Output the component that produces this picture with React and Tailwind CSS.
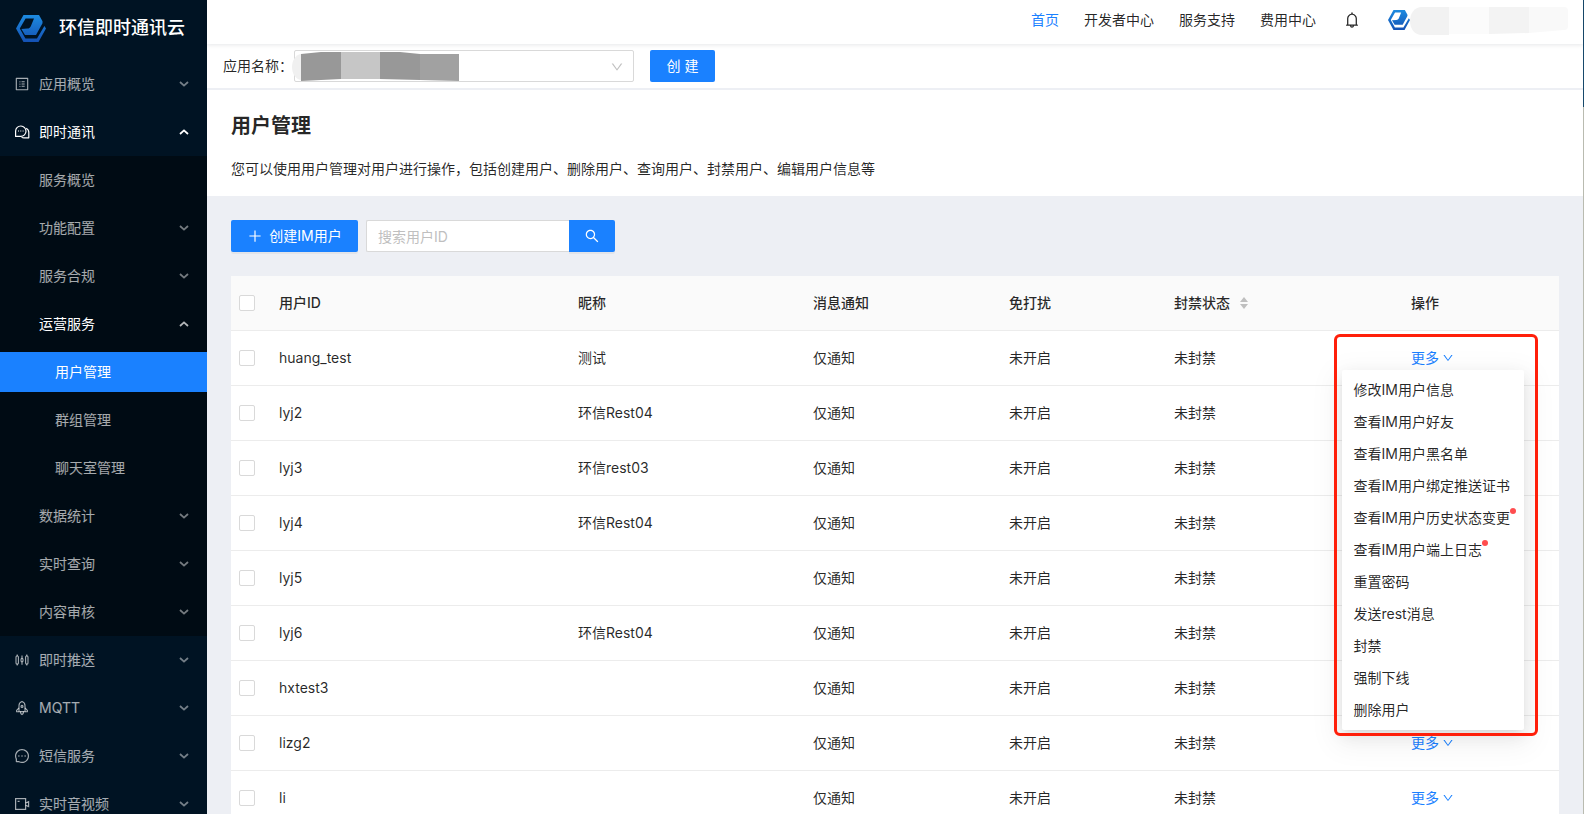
import { useState } from "react";
import {
  AiOutlineBell,
  AiOutlineDown,
  AiOutlinePlus,
  AiOutlineProfile,
  AiOutlineMessage,
  AiOutlineSearch,
} from "react-icons/ai";

const ChatsIcon = () => (
  <svg viewBox="0 0 16 16" className="w-4 h-4" fill="none" stroke="currentColor" strokeWidth="1.2">
    <path d="M1.6 12.4V7a5.2 5.2 0 1 1 5.2 5.4z" strokeLinejoin="round" />
    <path d="M12.2 4.2a4.8 4.8 0 0 1 2.6 4.4v5.2H10a5 5 0 0 1-2.4-.6" strokeLinejoin="round" />
    <path d="M4 7h1M6.3 7h1M8.6 7h1" />
  </svg>
);

const PushIcon = () => (
  <svg viewBox="0 0 16 16" className="w-4 h-4" fill="none" stroke="currentColor" strokeWidth="1.1">
    <rect x="2" y="4" width="2.4" height="8" rx="1" />
    <rect x="11.6" y="4" width="2.4" height="8" rx="1" />
    <rect x="7" y="6.4" width="2" height="3.4" rx="1" />
    <path d="M3.2 2.4V4M3.2 12v1.4M8 3.6v2.8M8 9.8v3M12.8 2.4V4M12.8 12v1.4" />
  </svg>
);

const RocketIcon = () => (
  <svg viewBox="0 0 16 16" className="w-4 h-4" fill="none" stroke="currentColor" strokeWidth="1.1" strokeLinejoin="round">
    <path d="M5 11.6V5.4C5 3.6 6.4 2 8 1.4c1.6.6 3 2.2 3 4v6.2z" />
    <path d="M5 8l-2.4 2.4v1.4H5M11 8l2.4 2.4v1.4H11" />
    <path d="M6.4 11.6c0 1.6.6 2.4 1.6 3 1-.6 1.6-1.4 1.6-3" />
    <circle cx="8" cy="6.4" r="1" />
  </svg>
);

const VideoIcon = () => (
  <svg viewBox="0 0 16 16" className="w-4 h-4" fill="none" stroke="currentColor" strokeWidth="1.2">
    <rect x="1.6" y="2.6" width="10" height="10.8" />
    <path d="M11.6 7l3-1.4v5l-3-1.4M3.6 5.4h2" />
  </svg>
);

const Logo = ({ id, className }) => (
  <svg viewBox="0 0 30 27" className={className}>
    <defs>
      <linearGradient id={id} x1="0" y1="0" x2="0" y2="1">
        <stop offset="0" stopColor="#1d8be0" />
        <stop offset="1" stopColor="#1451b4" />
      </linearGradient>
    </defs>
    <path
      fill={`url(#${id})`}
      d="M7.5 0H23l3.5 6.2v2L20 20H9L5.4 14l6-.4c1.6-.2 2.6-1 3.4-2.4L18 3.4H9.6L3.8 13.5 9.4 23.6H21L28.4 11 30 13.5 22.5 27h-15L0 13.5z"
    />
  </svg>
);

const menu = [
  { label: "应用概览", icon: <AiOutlineProfile className="w-4 h-4" /> },
  {
    label: "即时通讯",
    icon: <ChatsIcon />,
    open: true,
    children: [
      { label: "服务概览", leaf: true },
      { label: "功能配置" },
      { label: "服务合规" },
      {
        label: "运营服务",
        open: true,
        children: [
          { label: "用户管理", active: true },
          { label: "群组管理" },
          { label: "聊天室管理" },
        ],
      },
      { label: "数据统计" },
      { label: "实时查询" },
      { label: "内容审核" },
    ],
  },
  { label: "即时推送", icon: <PushIcon /> },
  { label: "MQTT", icon: <RocketIcon /> },
  { label: "短信服务", icon: <AiOutlineMessage className="w-4 h-4" /> },
  { label: "实时音视频", icon: <VideoIcon /> },
];

const users = [
  { id: "huang_test", nick: "测试" },
  { id: "lyj2", nick: "环信Rest04" },
  { id: "lyj3", nick: "环信rest03" },
  { id: "lyj4", nick: "环信Rest04" },
  { id: "lyj5", nick: "" },
  { id: "lyj6", nick: "环信Rest04" },
  { id: "hxtest3", nick: "" },
  { id: "lizg2", nick: "" },
  { id: "li", nick: "" },
];

const actions = [
  { label: "修改IM用户信息" },
  { label: "查看IM用户好友" },
  { label: "查看IM用户黑名单" },
  { label: "查看IM用户绑定推送证书" },
  { label: "查看IM用户历史状态变更", dot: true },
  { label: "查看IM用户端上日志", dot: true },
  { label: "重置密码" },
  { label: "发送rest消息" },
  { label: "封禁" },
  { label: "强制下线" },
  { label: "删除用户" },
];

const Arrow = ({ up, dim }) => (
  <svg
    viewBox="0 0 10 6"
    className={`w-[10px] h-[6px] ${up ? "rotate-180" : ""} ${dim ? "opacity-70" : ""}`}
    fill="none"
    stroke="currentColor"
    strokeWidth="1.8"
  >
    <path d="M1 1l4 3.6L9 1" />
  </svg>
);

const MenuTitle = ({ item }) => (
  <button
    type="button"
    className={`my-1 h-10 w-full flex items-center pl-[14px] pr-[18px] text-left hover:text-white ${
      item.open ? "text-white" : "text-white/65"
    }`}
  >
    <span className="w-4 mr-[9px] flex justify-center">{item.icon}</span>
    <span className="flex-1">{item.label}</span>
    {!item.leaf && <Arrow up={item.open} dim={!item.open || !item.icon} />}
  </button>
);

const Sidebar = () => (
  <aside className="w-[207px] shrink-0 bg-[#001323] overflow-hidden">
    <div className="h-[60px] pb-1 pl-4 flex items-center gap-[13px]">
      <Logo id="logo-side" className="w-[30px] h-[27px]" />
      <span className="text-lg font-medium text-white whitespace-nowrap">环信即时通讯云</span>
    </div>
    <nav className="flow-root">
      {menu.map((item) => (
        <div key={item.label} className="flow-root">
          <MenuTitle item={item} />
          {item.children && (
            <div className="bg-[#000b14] flow-root">
              {item.children.map((sub) => (
                <div key={sub.label} className="flow-root">
                  <MenuTitle item={sub} />
                  {sub.children?.map((leaf) => (
                    <div key={leaf.label} className="py-1">
                      <a
                        href="#"
                        className={`h-10 flex items-center pl-[55px] ${
                          leaf.active ? "bg-[#1a81ff] text-white" : "text-white/65 hover:text-white"
                        }`}
                      >
                        {leaf.label}
                      </a>
                    </div>
                  ))}
                </div>
              ))}
            </div>
          )}
        </div>
      ))}
    </nav>
  </aside>
);

const Header = () => (
  <header className="relative z-10 h-11 pb-1 pr-[15px] bg-white flex items-center justify-end shadow-[0_1px_4px_rgba(0,21,41,0.1)]">
    <nav className="flex items-center gap-[25px] mr-[27px]">
      <a href="#" className="text-[#1a81ff]">首页</a>
      <a href="#">开发者中心</a>
      <a href="#">服务支持</a>
      <a href="#">费用中心</a>
    </nav>
    <button type="button" aria-label="通知" className="mr-[27px]">
      <AiOutlineBell className="w-[18px] h-[18px]" />
    </button>
    <Logo id="logo-user" className="w-[22px] h-5" />
    {/* account name is masked */}
    <svg viewBox="0 0 158 30" className="w-[158px] h-[30px]">
      <path d="M12 2h27v28H12C4 30 0 23 0 16S4 2 12 2z" fill="#f2f2f2" />
      <path d="M39 2h40v27H39z" fill="#fbfbfb" />
      <path d="M79 2h40v26l-40 1z" fill="#f3f3f3" />
      <path d="M119 2h35q4 0 4 4v15q0 4-4 4l-35 3z" fill="#f9f9f9" />
    </svg>
  </header>
);

const AppBar = () => (
  <div className="h-[46px] pl-4 pb-px bg-white border-b-2 border-[#edeff4] flex items-center">
    <label htmlFor="app-name">应用名称：</label>
    <div className="relative w-[340px] ml-px">
      <select
        id="app-name"
        className="block w-full h-8 px-3 appearance-none bg-white border border-[#d9d9d9] rounded-xs outline-none"
      />
      <svg viewBox="0 0 168 30" className="absolute -left-[2px] top-[2px] w-[168px] h-[30px] pointer-events-none">
        <path d="M9 2v26C3 27 0 21 0 15S3 3 9 2z" fill="#f0f0f0" />
        <path d="M9 2L29 0h20v27l-40 2z" fill="#989898" />
        <path d="M49 0h39v27H49z" fill="#c6c6c6" />
        <path d="M88 0h20l20 2v26l-40-1z" fill="#989898" />
        <path d="M128 2h39v27l-39-1z" fill="#a1a1a1" />
      </svg>
      <AiOutlineDown className="absolute right-[10px] top-[10px] w-[14px] h-[14px] text-black/25 pointer-events-none" />
    </div>
    <button type="button" className="ml-4 h-8 w-[65px] rounded-xs bg-[#1a81ff] text-white">
      创 建
    </button>
  </div>
);

const ActionMenu = () => (
  <div className="absolute z-20 top-full left-1/2 -translate-x-1/2 mt-px">
    <ul className="w-[182px] py-1 bg-white rounded-xs shadow-[0_3px_6px_-4px_rgba(0,0,0,0.12),0_6px_16px_rgba(0,0,0,0.08),0_9px_28px_8px_rgba(0,0,0,0.05)]">
      {actions.map((action) => (
        <li key={action.label}>
          <button type="button" className="h-8 w-full px-3 text-left whitespace-nowrap hover:bg-gray-50">
            <span className="relative">
              {action.label}
              {action.dot && (
                <span className="absolute -right-[6px] -top-px w-[6px] h-[6px] rounded-full bg-[#ff4d4f]" />
              )}
            </span>
          </button>
        </li>
      ))}
    </ul>
    <div className="absolute -left-2 -right-[14px] -top-9 -bottom-[6px] border-3 border-[#ff1f0a] rounded-md pointer-events-none" />
  </div>
);

const Checkbox = ({ label }) => (
  <input
    type="checkbox"
    aria-label={label}
    className="block mx-auto w-4 h-4 appearance-none bg-white border border-[#d9d9d9] rounded-xs checked:bg-[#1a81ff]"
  />
);

const UserTable = ({ openId, onToggle }) => (
  <table className="w-full table-fixed border-separate border-spacing-0 bg-white text-left [&_th]:border-b [&_td]:border-b [&_th]:border-[#ececec] [&_td]:border-[#ececec]">
    <colgroup>
      <col className="w-[32px]" />
      <col className="w-[299px]" />
      <col className="w-[235px]" />
      <col className="w-[196px]" />
      <col className="w-[165px]" />
      <col className="w-[237px]" />
      <col className="w-[164px]" />
    </colgroup>
    <thead className="bg-[#fafafa]">
      <tr className="h-[55px]">
        <th>
          <Checkbox label="全选" />
        </th>
        <th className="px-4 font-medium">用户ID</th>
        <th className="px-4 font-medium">昵称</th>
        <th className="px-4 font-medium">消息通知</th>
        <th className="px-4 font-medium">免打扰</th>
        <th className="px-4 font-medium">
          <button type="button" className="flex items-center gap-[10px]">
            封禁状态
            <svg viewBox="0 0 8 12" className="w-2 h-3" fill="#bfbfbf">
              <path d="M4 0l4 5H0zM4 12l4-5H0z" />
            </svg>
          </button>
        </th>
        <th className="px-4 font-medium">操作</th>
      </tr>
    </thead>
    <tbody>
      {users.map((user) => (
        <tr key={user.id} className="h-[55px]">
          <td>
            <Checkbox label={user.id} />
          </td>
          <td className="px-4">{user.id}</td>
          <td className="px-4">{user.nick}</td>
          <td className="px-4">仅通知</td>
          <td className="px-4">未开启</td>
          <td className="px-4">未封禁</td>
          <td className="px-4">
            <div className="relative w-fit">
              <button
                type="button"
                onClick={() => onToggle(user.id)}
                className="flex items-center gap-[3px] text-[#1a81ff]"
              >
                更多
                <AiOutlineDown className="w-3 h-3" />
              </button>
              {openId === user.id && <ActionMenu />}
            </div>
          </td>
        </tr>
      ))}
    </tbody>
  </table>
);

const App = () => {
  const [keyword, setKeyword] = useState("");
  const [openId, setOpenId] = useState("huang_test");

  const handleToggle = (id) => setOpenId(openId === id ? null : id);

  return (
    <div className="h-screen flex overflow-hidden bg-[#edeff4] text-black/85 text-sm leading-[22px] font-[Inter,'Noto_Sans_CJK_SC',sans-serif]">
      <Sidebar />
      <div className="flex-1 min-w-0">
        <Header />
        <AppBar />

        <section className="h-[106px] px-6 pt-[22px] bg-white">
          <h1 className="text-xl leading-7 font-semibold">用户管理</h1>
          <p className="mt-[18px]">
            您可以使用用户管理对用户进行操作，包括创建用户、删除用户、查询用户、封禁用户、编辑用户信息等
          </p>
        </section>

        <main className="p-6">
          <div className="flex gap-2 mb-6">
            <button
              type="button"
              className="h-8 w-[127px] flex items-center justify-center gap-[6px] rounded-xs bg-[#1a81ff] text-white shadow-[0_2px_0_rgba(0,0,0,0.045)]"
            >
              <AiOutlinePlus className="w-4 h-4" />
              创建IM用户
            </button>
            <form className="flex" onSubmit={(e) => e.preventDefault()}>
              <input
                type="text"
                aria-label="搜索用户ID"
                placeholder="搜索用户ID"
                value={keyword}
                onChange={(e) => setKeyword(e.target.value)}
                className="w-[203px] h-8 px-[11px] bg-white border border-r-0 border-[#d9d9d9] rounded-l-xs outline-none placeholder:text-[#bfbfbf]"
              />
              <button
                type="submit"
                aria-label="搜索"
                className="w-[46px] h-8 flex items-center justify-center rounded-r-xs bg-[#1a81ff] text-white shadow-[0_2px_0_rgba(0,0,0,0.045)]"
              >
                <AiOutlineSearch className="w-4 h-4" />
              </button>
            </form>
          </div>
          <UserTable openId={openId} onToggle={handleToggle} />
        </main>
      </div>
      {/* window edge */}
      <div className="w-px shrink-0 bg-[#b9bbb0]">
        <div className="h-[107px] bg-[#17496b]" />
      </div>
    </div>
  );
};

export default App;
